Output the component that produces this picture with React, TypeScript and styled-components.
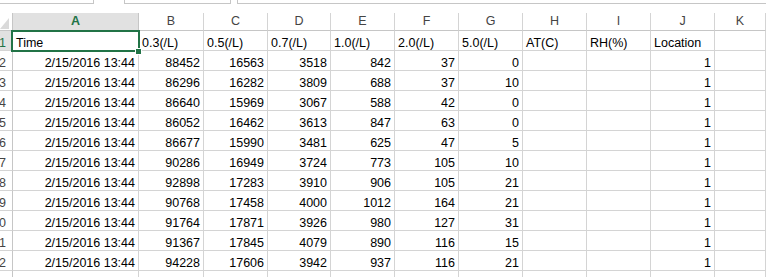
import React from 'react'
import styled, { createGlobalStyle, css } from 'styled-components'

const GlobalStyle = createGlobalStyle`
  html, body {
    margin: 0;
    padding: 0;
    background: #ffffff;
    overflow: hidden;
  }
  body {
    font-family: 'Liberation Sans', Arial, sans-serif;
  }
`

const GRID = '#d4d4d4'
const HEAD_LINE = '#c6c6c6'
const GREEN = '#217346'

const COLS = ['A', 'B', 'C', 'D', 'E', 'F', 'G', 'H', 'I', 'J', 'K']

const headerRow = ['Time', '0.3(/L)', '0.5(/L)', '0.7(/L)', '1.0(/L)', '2.0(/L)', '5.0(/L)', 'AT(C)', 'RH(%)', 'Location', '']

const readings: number[][] = [
  [88452, 16563, 3518, 842, 37, 0],
  [86296, 16282, 3809, 688, 37, 10],
  [86640, 15969, 3067, 588, 42, 0],
  [86052, 16462, 3613, 847, 63, 0],
  [86677, 15990, 3481, 625, 47, 5],
  [90286, 16949, 3724, 773, 105, 10],
  [92898, 17283, 3910, 906, 105, 21],
  [90768, 17458, 4000, 1012, 164, 21],
  [91764, 17871, 3926, 980, 127, 31],
  [91367, 17845, 4079, 890, 116, 15],
  [94228, 17606, 3942, 937, 116, 21],
]

const Page = styled.div`
  width: 766px;
  height: 277px;
  overflow: hidden;
  background: #fff;
`

/* remnant of the formula bar above the sheet */
const Strip = styled.div`
  height: 13px;
  display: flex;
  align-items: flex-start;
`

const StripBox = styled.div<{ $width?: number; $gap?: number; $left?: boolean }>`
  box-sizing: border-box;
  height: 4px;
  margin-left: ${({ $gap }) => $gap ?? 0}px;
  ${({ $width }) => ($width ? css`width: ${$width}px;` : css`flex: 1;`)}
  border-right: 1px solid ${HEAD_LINE};
  border-bottom: 1px solid ${HEAD_LINE};
  ${({ $left }) => $left && css`border-left: 1px solid ${HEAD_LINE};`}
`

const StripLine = styled.div`
  flex: 1;
  margin-left: 6px;
  height: 3px;
  border-left: 1px solid ${HEAD_LINE};
  border-bottom: 1px solid ${HEAD_LINE};
`

const Sheet = styled.div`
  position: relative;
  display: grid;
  grid-template-columns: 13px 126px 65px 64px 63px 64px 64px 64px 64px 64px 64px 1fr;
  grid-template-rows: 18px repeat(12, 20px) 20px;
`

const Corner = styled.div`
  position: relative;
  box-sizing: border-box;
  border-right: 1px solid ${HEAD_LINE};
  border-bottom: 1px solid ${HEAD_LINE};
  background: #fff;

  &::after {
    content: '';
    position: absolute;
    left: 0;
    bottom: 1px;
    width: 0;
    height: 0;
    border-style: solid;
    border-width: 0 0 11px 9px;
    border-color: transparent transparent #dadada transparent;
  }
`

const ColHeader = styled.div<{ $selected?: boolean }>`
  box-sizing: border-box;
  border-right: 1px solid ${GRID};
  border-bottom: 1px solid ${HEAD_LINE};
  font-size: 12.5px;
  line-height: 17px;
  text-align: center;
  color: #444;
  background: #fff;
  ${({ $selected }) =>
    $selected &&
    css`
      background: #e1e1e1;
      color: ${GREEN};
      font-weight: bold;
      border-right-color: #c6c6c6;
    `}
`

const RowHeader = styled.div<{ $selected?: boolean }>`
  box-sizing: border-box;
  border-right: 1px solid ${HEAD_LINE};
  border-bottom: 1px solid ${GRID};
  overflow: hidden;
  white-space: nowrap;
  display: flex;
  justify-content: flex-end;
  padding: 5px 6px 0 0;
  font-size: 12.5px;
  line-height: 14px;
  color: #444;
  background: #fff;
  ${({ $selected }) =>
    $selected &&
    css`
      background: #e1e1e1;
      color: ${GREEN};
    `}
`

const Cell = styled.div<{ $align?: 'left' | 'right' }>`
  box-sizing: border-box;
  border-right: 1px solid ${GRID};
  border-bottom: 1px solid ${GRID};
  overflow: hidden;
  white-space: nowrap;
  padding: 5px 3px 0 3px;
  font-size: 12.5px;
  line-height: 14px;
  color: #000;
  text-align: ${({ $align }) => $align ?? 'left'};
`

/* active-cell outline around A1, drawn over the grid */
const Selection = styled.div`
  position: absolute;
  left: 11px;
  top: 17px;
  width: 129px;
  height: 22px;
  box-sizing: border-box;
  border: 2px solid ${GREEN};
  pointer-events: none;
`

const FillHandle = styled.div`
  position: absolute;
  left: 135px;
  top: 35px;
  width: 7px;
  height: 7px;
  box-sizing: border-box;
  background: ${GREEN};
  border: 1px solid #fff;
`

export default function App() {
  const rows: (string | number | '')[][] = readings.map((r) => [
    '2/15/2016 13:44',
    ...r,
    '',
    '',
    1,
    '',
  ])

  return (
    <>
      <GlobalStyle />
      <Page>
        <Strip>
          <StripBox $width={94} />
          <StripBox $width={107} $gap={30} $left />
          <StripLine />
        </Strip>

        <Sheet>
          <Corner />
          {COLS.map((c) => (
            <ColHeader key={c} $selected={c === 'A'}>
              {c}
            </ColHeader>
          ))}

          <RowHeader $selected>1</RowHeader>
          {headerRow.map((h, i) => (
            <Cell key={i}>{h}</Cell>
          ))}

          {rows.map((row, ri) => (
            <React.Fragment key={ri}>
              <RowHeader>{ri + 2}</RowHeader>
              {row.map((v, ci) => (
                <Cell key={ci} $align="right">
                  {v}
                </Cell>
              ))}
            </React.Fragment>
          ))}

          <RowHeader>13</RowHeader>
          {COLS.map((c) => (
            <Cell key={c} />
          ))}

          <Selection />
          <FillHandle />
        </Sheet>
      </Page>
    </>
  )
}
